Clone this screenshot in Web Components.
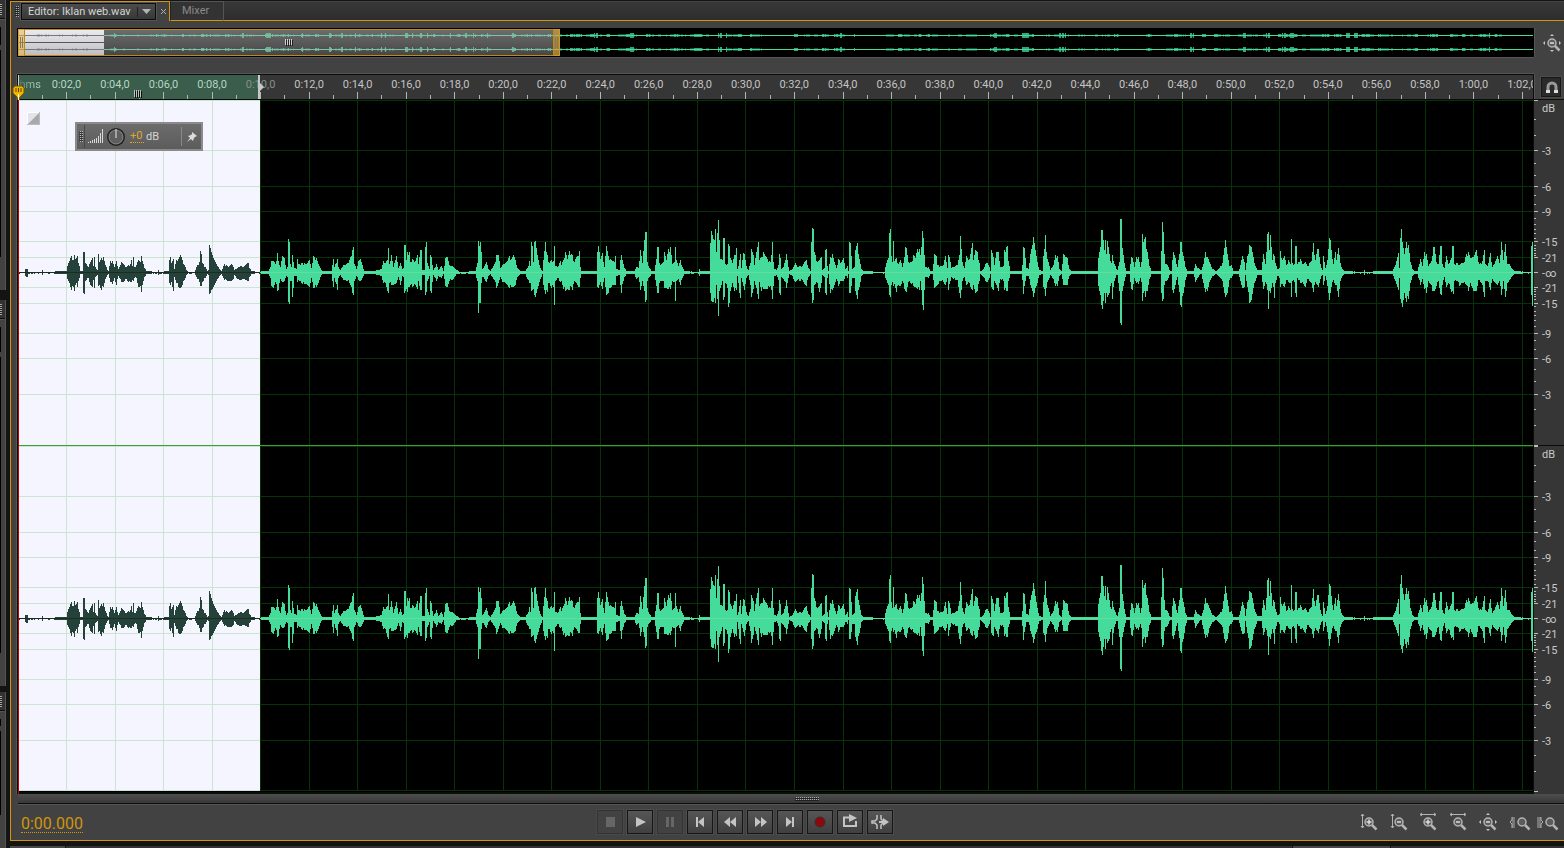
<!DOCTYPE html>
<html lang="en">
<head>
<meta charset="utf-8">
<meta name="viewport" content="width=device-width, initial-scale=1">
<title>Editor: Iklan web.wav</title>
<style>
  body {
    margin: 0;
    background: #141414;
    color: #c8c8c8;
    font: 11px/14px Roboto, "Noto Sans", sans-serif;
    --gold: #d0950c;
    --face: #424242;
    --dark: #141414;
    --ruler: #363636;
    --wave: #45dc9b;
    --sel: 16%;
    overflow: hidden;
  }
</style>
</head>
<body>
<app-shell>
  <side-panel slot="side" style="flex: 290 0 0"></side-panel>
  <side-panel slot="side" style="flex: 386 0 0; margin-top: 10px"></side-panel>
  <side-panel slot="side" style="flex: 156 0 0; margin-top: 6px"></side-panel>

  <tab-bar slot="tabs" file="Editor: Iklan web.wav">Mixer</tab-bar>
  <wave-overview slot="overview"></wave-overview>
  <tool-button slot="overview-tool" plain label="Zoom out full"><tool-icon name="zoom-full"></tool-icon></tool-button>
  <time-ruler slot="ruler"></time-ruler>
  <tool-button slot="ruler-tool" snap label="Snap"><tool-icon name="magnet"></tool-icon></tool-button>

  <wave-channel slot="plot"></wave-channel>
  <wave-channel slot="plot" last></wave-channel>
  <gain-hud slot="hud">dB</gain-hud>
  <db-scale slot="scale"></db-scale>
  <db-scale slot="scale" last></db-scale>

  <time-display slot="time">0:00.000</time-display>
  <button-row slot="transport" style="--gap: 4px">
    <tool-button off label="Stop"><tool-icon name="stop"></tool-icon></tool-button>
    <tool-button label="Play"><tool-icon name="play"></tool-icon></tool-button>
    <tool-button off label="Pause"><tool-icon name="pause"></tool-icon></tool-button>
    <tool-button label="Move to previous"><tool-icon name="prev"></tool-icon></tool-button>
    <tool-button label="Rewind"><tool-icon name="rewind"></tool-icon></tool-button>
    <tool-button label="Fast forward"><tool-icon name="forward"></tool-icon></tool-button>
    <tool-button label="Move to next"><tool-icon name="next"></tool-icon></tool-button>
    <tool-button label="Record"><tool-icon name="record"></tool-icon></tool-button>
    <tool-button label="Loop playback"><tool-icon name="loop"></tool-icon></tool-button>
    <tool-button label="Skip selection"><tool-icon name="skip"></tool-icon></tool-button>
  </button-row>
  <button-row slot="zoom" style="--gap: 10px">
    <tool-button plain label="Zoom in amplitude"><tool-icon name="amp-in"></tool-icon></tool-button>
    <tool-button plain label="Zoom out amplitude"><tool-icon name="amp-out"></tool-icon></tool-button>
    <tool-button plain label="Zoom in time"><tool-icon name="time-in"></tool-icon></tool-button>
    <tool-button plain label="Zoom out time"><tool-icon name="time-out"></tool-icon></tool-button>
    <tool-button plain label="Zoom out full"><tool-icon name="zoom-full"></tool-icon></tool-button>
    <tool-button plain label="Zoom in at in point"><tool-icon name="in-point"></tool-icon></tool-button>
    <tool-button plain label="Zoom in at out point"><tool-icon name="out-point"></tool-icon></tool-button>
  </button-row>
</app-shell>

<script>
// peaks of the clip: x,up,down (x in px of the editor, which starts at 18)
const PEAKS = `18,0,0 24,0,0 25,3,3 27,3,4 28,0,0 41,0,0 42,2,2 43,0,0 66,1,1 67,6,6 69,11,10 71,16,17 73,12,14 74,17,18 76,14,10 77,16,14
79,6,5 80,1,1 82,1,1 83,20,20 84,20,21 85,9,8 86,8,7 88,5,5 90,10,12 92,14,14 93,6,7 94,15,15 95,5,4 97,2,2 98,18,13 99,10,12 101,14,17 103,15,14
105,7,6 107,2,2 108,1,1 110,11,9 112,11,11 114,5,5 116,11,12 118,3,3 121,10,9 123,8,9 125,5,6 128,7,9 130,8,9 131,12,9 132,6,7 133,15,8 134,5,5
136,7,5 138,12,14 140,10,13 141,16,19 142,11,12 144,4,4 146,1,1 157,0,0 158,2,2 159,0,0 168,1,1 169,12,10 170,15,12 171,9,9 173,13,18 174,3,4
176,12,10 178,13,14 180,17,15 182,12,12 184,7,7 186,2,2 188,0,0 194,0,0 195,2,2 197,7,6 199,10,9 200,21,13 201,18,13 202,9,9 205,5,5 207,1,1 208,2,2
209,27,21 210,24,20 211,20,17 213,14,14 216,8,8 219,3,3 221,1,1 223,6,5 224,8,7 226,7,7 228,5,8 231,8,8 233,5,6 234,2,2 237,4,6 240,6,7 243,5,6
246,8,7 248,9,8 249,4,4 251,1,1 259,0,0 262,1,1 268,1,1 270,5,5 271,11,13 273,11,15 275,8,9 277,19,18 278,11,17 280,5,6 282,16,9 284,14,8 286,3,3
287,5,4 288,33,29 289,30,31 290,8,8 291,5,8 292,17,24 293,10,15 294,4,3 296,3,3 297,13,9 298,8,7 302,9,11 306,8,11 309,12,14 311,4,5 313,16,15
316,14,14 318,8,10 320,4,4 322,1,1 331,1,1 333,13,14 334,5,5 337,13,17 338,5,5 340,2,2 343,7,7 346,8,8 348,9,7 350,15,12 352,22,20 353,25,22
354,8,8 356,3,3 358,11,7 360,13,8 362,7,5 364,1,1 371,1,1 378,2,2 381,3,3 383,11,10 385,9,10 387,12,18 388,24,20 389,8,10 391,17,12 393,5,12
396,16,10 398,4,4 400,9,12 402,3,3 403,4,4 404,27,20 405,27,18 406,12,16 407,20,19 409,20,14 410,10,12 412,13,14 415,11,12 417,17,16 418,8,8
420,22,17 421,22,17 422,2,2 424,2,2 425,25,22 426,30,19 427,9,8 429,3,3 430,17,18 431,15,20 433,2,2 436,8,8 438,2,3 441,6,5 443,1,1 445,14,13
447,15,14 449,7,8 453,5,6 456,2,1 460,0,0 475,1,1 477,9,8 478,31,40 479,26,30 480,30,30 481,20,10 482,3,4 484,6,6 486,10,9 488,3,3 490,1,1 492,4,4
495,10,9 496,17,15 498,17,10 500,4,4 502,7,9 504,8,9 507,11,12 509,16,15 511,13,14 513,17,14 515,12,12 517,4,4 520,1,1 525,1,1 527,4,6 529,11,10
530,6,10 531,30,18 532,26,17 533,10,16 534,30,22 535,31,24 537,17,16 539,7,9 541,2,4 542,1,1 543,12,12 545,30,21 547,17,19 548,10,10 551,12,15
553,11,14 554,26,32 555,6,8 557,5,5 560,11,9 561,7,8 563,12,16 565,20,18 567,13,16 569,21,17 571,18,14 572,17,17 574,10,8 576,15,10 578,16,14
579,21,14 580,5,5 581,1,1 596,1,1 597,20,14 598,26,15 600,13,9 602,19,16 604,5,5 606,26,22 608,16,20 610,13,15 612,11,12 614,10,12 615,16,12
616,3,3 619,2,2 620,12,12 621,17,20 622,12,11 624,4,4 626,1,1 634,1,1 636,5,6 638,4,4 640,22,17 642,9,8 644,32,18 645,40,29 646,40,27 647,10,8
649,4,4 651,1,1 654,1,1 656,13,13 657,25,20 658,25,20 659,9,10 661,8,8 663,10,8 664,20,15 666,12,15 668,23,16 670,25,16 672,8,8 674,10,9 675,25,28
676,12,8 678,6,6 680,12,12 682,5,5 684,1,1 698,0,0 699,3,3 700,1,1 709,1,1 710,29,20 711,41,28 713,33,29 715,43,30 716,20,12 717,39,26 718,52,43
719,32,18 720,13,15 722,12,8 723,34,27 724,34,24 725,8,10 727,8,15 728,28,34 729,26,30 730,14,18 732,9,10 734,17,18 736,24,17 737,3,3 739,12,20
740,18,25 741,4,5 743,19,13 744,18,17 746,6,5 748,2,2 750,9,12 751,23,24 753,17,16 754,7,8 756,20,15 758,30,26 759,12,9 761,15,18 763,20,16 765,16,16
767,13,16 770,10,13 772,30,26 773,10,13 774,3,3 776,2,2 778,7,7 779,18,20 780,14,22 781,3,4 783,5,6 785,12,9 786,18,15 788,5,5 789,1,1 791,2,2
793,5,6 795,9,9 797,5,7 799,6,8 802,6,7 804,10,11 806,12,13 808,4,4 810,1,1 811,30,20 812,44,30 813,43,27 814,20,12 817,10,10 819,12,19 821,15,10
822,2,2 824,4,4 825,22,20 826,23,22 827,6,5 828,1,1 830,15,20 832,18,17 834,10,12 836,4,6 838,13,13 841,10,8 843,14,8 845,3,3 847,6,5 848,1,1
849,30,20 850,29,20 852,3,5 854,5,5 855,22,18 857,29,26 859,13,14 861,3,3 863,1,1 884,0,0 885,5,5 886,9,7 888,14,12 889,39,22 890,43,24 891,16,12
892,10,9 893,31,13 894,11,11 896,14,19 898,8,12 900,12,13 902,5,8 904,15,16 905,25,18 906,24,19 908,10,9 911,10,11 913,17,13 915,14,14 917,23,16
919,23,17 920,17,8 922,41,32 923,34,37 925,5,4 928,5,5 930,1,1 932,1,1 934,18,15 936,16,13 937,7,12 940,6,8 943,7,9 945,16,12 947,4,5 948,17,17
949,15,11 951,4,4 953,5,6 957,7,7 959,17,20 960,36,25 962,10,8 964,4,4 966,16,12 968,12,9 970,18,14 972,29,17 973,12,12 975,22,20 977,20,18 979,9,8
980,1,1 983,3,4 985,8,8 987,9,9 989,5,5 990,1,1 991,22,14 993,15,17 994,7,8 996,20,12 998,20,18 1000,5,6 1003,6,8 1004,22,17 1007,26,18 1008,11,8
1010,1,1 1021,1,1 1022,7,7 1023,25,21 1024,24,13 1026,4,3 1028,3,3 1030,18,12 1032,27,18 1033,35,24 1035,22,15 1037,10,10 1039,2,2 1042,1,1
1043,16,14 1045,37,23 1046,20,15 1048,10,7 1050,2,2 1053,7,6 1055,17,13 1057,16,13 1059,3,3 1061,1,1 1063,18,12 1065,15,12 1067,14,12 1069,3,3
1071,1,1 1097,1,1 1098,14,13 1100,25,22 1101,42,32 1102,42,36 1104,22,20 1105,32,30 1106,18,20 1107,31,24 1109,18,20 1111,9,10 1112,17,26 1114,8,8
1116,3,2 1117,2,2 1119,10,18 1120,53,50 1121,53,52 1122,24,18 1124,9,8 1126,1,1 1129,1,1 1131,15,16 1132,14,17 1134,5,5 1136,15,10 1138,15,11
1140,5,5 1141,10,9 1142,38,28 1144,33,18 1145,35,24 1147,20,18 1149,6,6 1151,1,1 1160,1,1 1161,21,20 1162,50,28 1163,40,26 1164,18,12 1165,8,8
1167,7,7 1169,2,2 1171,1,1 1172,12,17 1173,20,20 1175,14,12 1177,5,4 1178,12,12 1180,30,32 1181,30,34 1183,16,20 1185,5,7 1187,1,1 1193,1,1
1195,8,9 1197,4,5 1199,3,2 1201,2,1 1203,8,10 1205,20,19 1207,15,18 1209,10,9 1212,3,3 1216,1,1 1219,4,4 1222,9,8 1224,24,20 1225,32,24 1227,18,20
1229,6,7 1231,7,5 1233,1,1 1238,1,1 1240,7,8 1242,16,15 1244,10,14 1245,2,2 1247,16,14 1249,27,30 1251,25,27 1253,15,15 1255,6,8 1257,2,2 1261,2,2
1263,18,16 1265,8,9 1267,38,17 1268,40,36 1269,22,18 1270,37,20 1272,12,10 1273,18,14 1274,16,25 1275,9,10 1277,3,3 1279,4,5 1280,21,14 1282,12,11
1284,16,14 1286,7,7 1288,12,9 1290,8,10 1291,33,24 1292,9,8 1294,8,9 1295,26,20 1296,26,24 1297,8,5 1300,13,10 1303,8,11 1305,10,14 1307,6,6 1309,9,8
1311,11,10 1313,29,19 1315,12,9 1317,23,12 1318,23,14 1319,15,10 1321,4,3 1322,2,2 1323,16,12 1325,4,3 1327,12,13 1329,34,27 1330,32,20 1331,22,14
1333,8,7 1335,20,12 1336,12,12 1338,24,24 1340,9,8 1342,3,3 1345,1,1 1363,0,0 1364,2,2 1365,0,0 1380,1,1 1392,1,1 1395,7,8 1398,19,17 1399,4,5
1400,34,26 1401,43,30 1402,30,34 1404,18,20 1406,30,29 1408,27,26 1410,10,10 1412,3,3 1414,1,1 1417,1,1 1420,13,12 1422,6,6 1424,20,16 1426,18,20
1428,6,8 1430,9,11 1432,16,18 1433,25,18 1434,25,18 1436,10,13 1438,8,8 1440,26,21 1441,26,22 1442,8,12 1444,4,4 1446,16,14 1448,8,10 1451,14,19
1452,26,18 1453,26,21 1454,8,8 1457,9,8 1459,7,13 1461,9,10 1463,9,10 1466,18,12 1468,20,18 1470,14,10 1473,15,18 1476,22,18 1478,10,7 1481,8,10
1484,22,24 1485,8,8 1487,6,8 1490,19,17 1492,5,6 1494,8,9 1497,16,12 1499,9,8 1501,30,22 1502,22,16 1503,12,8 1505,28,24 1506,16,18 1507,8,10
1509,8,7 1511,4,4 1514,1,1 1530,0,0 1531,26,22 1532,30,33 1533,30,33`.split(/\s+/).map(p => p.split(',').map(Number));

const WIDTH = 1515;
const SELECTED = 242;
const STEP = 48.53; // two seconds

// one [up, down] pair for every column
const columns = [];
let k = 0;
for (let x = 18; x < 18 + WIDTH; x++) {
  while (PEAKS[k + 1][0] < x) k++;
  const a = PEAKS[k], b = PEAKS[k + 1];
  const t = (x - a[0]) / (b[0] - a[0]);
  const rough = t > 0 && t < 1 && x % 3 === 0 ? 0.85 : 1;
  columns.push([1, 2].map(i => Math.round((a[i] + (b[i] - a[i]) * t) * rough)));
}

function noise(n) {
  const v = Math.sin(n * 12.9898) * 43758.5453;
  return v - Math.floor(v);
}

function wavePath(from, to, mid) {
  let d = '';
  for (let x = from; x < to; x++) {
    let [u, l] = columns[x];
    if (u + l === 0 && noise(x) > 0.7) l = 1;
    d += `M${x} ${mid - u}h1v${u + l + 1}h-1z`;
  }
  return d;
}

class BaseElement extends HTMLElement {
  connectedCallback() {
    if (this.shadowRoot) return;
    this.attachShadow({ mode: 'open' });
    this.shadowRoot.innerHTML = this.render();
  }
}

class AppShell extends BaseElement {
  render() {
    return `
      <style>
        :host {
          display: grid;
          grid-template: 1fr 7px / 10px 1fr;
          height: 100vh;
        }
        .side {
          grid-row: 1 / 3;
          display: flex;
          flex-direction: column;
          width: 6px;
        }
        main {
          display: flex;
          flex-direction: column;
          min-width: 0;
          min-height: 0;
        }
        .body {
          flex: 1;
          min-height: 0;
          display: flex;
          flex-direction: column;
          background: var(--face);
          border: solid var(--gold);
          border-width: 0 0 1px 1px;
        }
        .work {
          flex: 1;
          min-height: 0;
          display: grid;
          grid-template: "overview full" 30px ". ." 16px "ruler snap" 26px "plot scale" 1fr / 1fr 30px;
          padding: 7px 0 0 6px;
        }
        .overview { grid-area: overview; }
        .overview-tool { grid-area: full; display: grid; place-items: center end; }
        .ruler { grid-area: ruler; min-width: 0; }
        .ruler-tool {
          grid-area: snap;
          display: grid;
          place-items: center;
          padding-left: 4px;
          border-bottom: 1px solid #0c0c0c;
        }
        .plot {
          grid-area: plot;
          position: relative;
          display: flex;
          flex-direction: column;
          background: #000;
          border: solid #0c0c0c;
          border-width: 0 1px 2px;
          box-shadow: -1px 0 #555;
        }
        .playhead {
          position: absolute;
          inset: 0 auto -2px 0;
          width: 1px;
          background: #c80000;
        }
        .pin { position: absolute; left: -6px; top: -15px; }
        .fade { position: absolute; left: 9px; top: 12px; }
        .hud { position: absolute; left: 57px; top: 22px; }
        .scale {
          grid-area: scale;
          display: flex;
          flex-direction: column;
          background: var(--ruler);
          padding-bottom: 2px;
        }
        .scroll {
          margin-left: 7px;
          height: 9px;
          background: linear-gradient(#4e4e4e, #383838);
          border-bottom: 1px solid #0c0c0c;
          box-shadow: 0 1px #555;
          display: grid;
          place-items: center;
          padding-left: 31px;
        }
        .scroll i {
          width: 24px;
          height: 4px;
          background: conic-gradient(#aaa 25%, #222 0 50%, #222 0 75%, #444 0) 0 0 / 2px 2px;
        }
        .transport {
          display: flex;
          align-items: center;
          height: 36px;
          padding: 0 4px 0 10px;
        }
        .lead { flex: 11; }
        .trail { flex: 10; }
        footer {
          display: flex;
          gap: 1px;
          padding-top: 5px;
        }
        footer i { background: #333; }
      </style>
      <div class="side"><slot name="side"></slot></div>
      <main>
        <slot name="tabs"></slot>
        <div class="body">
          <div class="work">
            <div class="overview"><slot name="overview"></slot></div>
            <div class="overview-tool"><slot name="overview-tool"></slot></div>
            <div class="ruler"><slot name="ruler"></slot></div>
            <div class="ruler-tool"><slot name="ruler-tool"></slot></div>
            <div class="plot">
              <slot name="plot"></slot>
              <div class="playhead"></div>
              <svg class="pin" width="13" height="15">
                <path d="M1 3l2-2h7l2 2v5l-4 4-1 3h-1l-1-3-4-4z" fill="#f0b400" stroke="#7a5600"/>
                <path d="M4 3v4M6.500 3v4M9 3v4" stroke="#5a4000"/>
                <path d="M6 9h1v6h-1z" fill="#fff"/>
              </svg>
              <svg class="fade" width="13" height="13">
                <path d="M0 0h13v13H0z" fill="#fff"/>
                <path d="M1 1h11v11H1z" fill="#e4e4e8"/>
                <path d="M12 1v11H1z" fill="#a9a9ad"/>
                <path d="M0 12.500h13M12.500 0v13" stroke="#bbb"/>
              </svg>
              <div class="hud"><slot name="hud"></slot></div>
            </div>
            <div class="scale"><slot name="scale"></slot></div>
          </div>
          <div class="scroll"><i></i></div>
          <div class="transport">
            <slot name="time"></slot>
            <span class="lead"></span>
            <slot name="transport"></slot>
            <span class="trail"></span>
            <slot name="zoom"></slot>
          </div>
        </div>
      </main>
      <footer>
        <i style="flex: 55; background: #484848"></i>
        <i style="flex: 1226"></i>
        <i style="flex: 97; background: #484848"></i>
        <i style="flex: 173"></i>
      </footer>
    `;
  }
}

class SidePanel extends BaseElement {
  render() {
    return `
      <style>
        :host {
          display: flex;
          flex-direction: column;
          background: #424242;
          border-right: 1px solid #555;
          box-shadow: 0 1px #555 inset;
        }
        header {
          height: 18px;
          border-bottom: 1px solid #0c0c0c;
          background: #333;
          display: flex;
          align-items: center;
          box-shadow: 0 1px #555;
        }
        header i {
          width: 2px;
          height: 11px;
          background: repeating-linear-gradient(#aaa 0 1px, #222 1px 2px);
        }
        .field { width: 1px; background: #000; }
      </style>
      <header><i></i></header>
      <div class="field" style="flex: 17; margin-top: 8px"></div>
      <div class="field" style="flex: 200; margin: 5px 0 33px"></div>
    `;
  }
}

class TabBar extends BaseElement {
  render() {
    return `
      <style>
        :host { display: flex; height: 21px; box-sizing: border-box; padding-top: 1px; }
        .active {
          display: flex;
          align-items: center;
          box-sizing: border-box;
          width: 160px;
          padding-left: 4px;
          background: var(--face);
          border: solid var(--gold);
          border-width: 1px 1px 0;
        }
        .grip {
          width: 4px;
          height: 11px;
          margin-right: 2px;
          background: conic-gradient(#aaa 25%, #222 0 50%, #222 0 75%, #444 0) 0 0 / 2px 2px;
        }
        label {
          display: grid;
          align-items: center;
          box-sizing: border-box;
          width: 135px;
          height: 17px;
          border: 1px solid #0c0c0c;
          box-shadow: 0 0 0 1px #555;
          background: linear-gradient(#4c4c4c, #383838);
        }
        label > * { grid-area: 1 / 1; }
        select {
          appearance: none;
          height: 15px;
          padding: 0 18px 0 6px;
          border: 0;
          background: none;
          color: #d4d4d4;
          font: inherit;
          line-height: 15px;
        }
        label svg { justify-self: end; pointer-events: none; }
        .close {
          display: grid;
          place-items: center;
          margin-left: 2px;
          padding: 0;
          width: 11px;
          height: 16px;
          border: 0;
          background: none;
        }
        .tab {
          border: solid #555;
          border-width: 1px 1px 0;
          border-left-color: #222;
          border-bottom: 1px solid var(--gold);
          padding: 0 14px 0 11px;
          background: #333;
          color: #8a8a8a;
          font: inherit;
          line-height: 18px;
        }
        .rest {
          flex: 1;
          border-top: 1px solid #444;
          border-bottom: 1px solid var(--gold);
          background: linear-gradient(#383838, #2d2d2d);
        }
      </style>
      <div class="active">
        <span class="grip"></span>
        <label>
          <select aria-label="Open file"><option>${this.getAttribute('file')}</option></select>
          <svg width="22" height="15">
            <path d="M4.500 3v10" stroke="#222"/>
            <path d="M9 5h9l-4.500 5z" fill="#b4b4b4"/>
          </svg>
        </label>
        <button class="close" aria-label="Close">
          <svg width="7" height="7"><path d="M1 1l5 5M6 1L1 6" stroke="#b0b0b0"/></svg>
        </button>
      </div>
      <button class="tab"><slot></slot></button>
      <div class="rest"></div>
    `;
  }
}

class WaveOverview extends BaseElement {
  render() {
    // the visible part is the clip itself, the remainder is quieter material
    const win = 542, sel = 86;
    const parts = ['', '', '', '', '', ''];
    for (let x = 0; x < WIDTH; x++) {
      let peak;
      if (x < win) {
        const i = Math.floor(x * WIDTH / win);
        peak = Math.max(...columns.slice(i, i + 3).map(c => c[0]));
      } else {
        const group = noise(Math.floor(x / 4) + 3);
        peak = noise(Math.floor(x / 31)) > 0.15 ? group * 34 : 0;
        if (noise(x + 9) > 0.7) peak *= 0.6;
      }
      const h = peak > 31 ? 2 : peak > 14 ? 1 : 0;
      if (!h) continue;
      const part = (x < sel ? 0 : x < win ? 1 : 2) + (peak > 25 ? 3 : 0);
      for (const y of [6, 20]) parts[part] += `M${x} ${y - h}h1v${h * 2 + 1}h-1z`;
    }
    return `
      <style>
        :host {
          display: block;
          border: 1px solid #000;
          height: 27px;
          box-shadow: 0 1px #555, 1px 0 #555;
          background: #000;
        }
        svg { display: block; width: 100%; height: 27px; }
      </style>
      <svg viewBox="0 0 1515 27" preserveAspectRatio="none" shape-rendering="crispEdges">
        <linearGradient id="view" x2="0" y2="1"><stop stop-color="#6e6e6e"/><stop offset="1" stop-color="#454545"/></linearGradient>
        <linearGradient id="sel" x2="0" y2="1"><stop stop-color="#ececf0"/><stop offset="1" stop-color="#bcbcc2"/></linearGradient>
        <path d="M0 0h542v27H0z" fill="url(#view)"/>
        <path d="M0 0h86v27H0z" fill="url(#sel)"/>
        <path d="${parts[0]}${parts[3]}" fill="#777" opacity=".35"/>
        <path d="${parts[1]}" fill="#74c8a3" opacity=".3"/>
        <path d="${parts[4]}" fill="#74c8a3" opacity=".8"/>
        <path d="${parts[2]}" fill="#3ac58a" opacity=".4"/>
        <path d="${parts[5]}" fill="#3ac58a" opacity=".85"/>
        <path d="M0 13h86v1H0z" fill="#55555a"/>
        <path d="M0 6h86v1H0zM0 20h86v1H0z" fill="#77777a"/>
        <path d="M86 6h456v1H86zM86 20h456v1H86z" fill="#7cc4a6"/>
        <path d="M542 6h973v1H542zM542 20h973v1H542z" fill="#45dc9b"/>
        <path d="M0 0h542v27H0zM1 1v25h540V1z" fill="#c08a10" fill-rule="evenodd"/>
        <path d="M0 0h7v27H0z" fill="#f0b440" opacity=".5"/>
        <path d="M535 0h7v27h-7z" fill="#d9a430" opacity=".6"/>
        <path d="M6 0h1v27H6zM535 0h1v27h-1z" fill="#c08a10"/>
        <path d="M2 8h1v11H2zM4 8h1v11H4zM537 8h1v11h-1zM539 8h1v11h-1z" fill="#8a7a50"/>
        <path d="M267 10h1v6h-1zM269 10h1v6h-1zM271 10h1v6h-1zM273 10h1v6h-1z" fill="#d0d0d0"/>
        <path d="M268 11h1v6h-1zM270 11h1v6h-1zM272 11h1v6h-1zM274 11h1v6h-1z" fill="#222"/>
      </svg>
    `;
  }
}

class TimeRuler extends BaseElement {
  render() {
    let cells = '';
    for (let s = 2; s <= 62; s += 2) {
      const text = `${Math.floor(s / 60)}:${String(s % 60).padStart(2, '0')},0`;
      const tone = s < 10 ? 'in' : s === 10 ? 'edge' : '';
      cells += `<span class="${tone}">${text}</span>`;
    }
    let ticks = '';
    for (let i = 1; i * STEP / 2 < WIDTH; i++) {
      const x = Math.floor(i * STEP / 2);
      ticks += i % 2 ? `M${x} 20h1v4h-1z` : `M${x} 17h1v7h-1z`;
    }
    return `
      <style>
        :host {
          display: grid;
          grid-template-columns: minmax(0, 1fr);
          height: 24px;
          border: 1px solid #0c0c0c;
          background: var(--ruler);
          box-shadow: 0 -1px #555, -1px 0 #555, 1px 0 #555;
        }
        :host > * { grid-area: 1 / 1; }
        .layer { grid-area: 1 / 1; }
        .sel {
          width: var(--sel);
          background: #3b5d4c;
          box-shadow: 1px 0 #cfcfcf inset;
        }
        .marks { position: relative; width: var(--sel); }
        .bars { position: absolute; left: 116px; top: 15px; }
        .bracket { position: absolute; right: -4px; top: 0; }
        svg.ticks { display: block; width: 100%; height: 24px; }
        .labels {
          display: flex;
          overflow: hidden;
          line-height: 20px;
          white-space: nowrap;
        }
        .labels span {
          flex: 0 0 3.2033%;
          display: flex;
          justify-content: center;
          color: #c4c4c4;
        }
        .labels .unit {
          flex-basis: 1.6%;
          background: linear-gradient(90deg, #4a6b59, #a9cfba 60%);
          background-clip: text;
          color: transparent;
        }
        .labels .in { color: #b4d8c4; }
        .labels .edge { color: #84908a; }
      </style>
      <div class="layer sel"></div>
      <svg class="layer ticks" viewBox="0 0 1515 24" preserveAspectRatio="none" shape-rendering="crispEdges">
        <path d="${ticks}" fill="#b4b4b4"/>
      </svg>
      <div class="layer labels"><span class="unit">hms</span>${cells}</div>
      <div class="layer marks">
        <svg class="bars" width="9" height="8" shape-rendering="crispEdges">
          <path d="M0 0h1v7H0zM2 0h1v7H2zM4 0h1v7H4zM6 0h1v7H6z" fill="#b8c8be"/>
          <path d="M1 1h1v7H1zM3 1h1v7H3zM5 1h1v7H5zM7 1h1v7H7z" fill="#111"/>
        </svg>
        <svg class="bracket" width="6" height="24">
          <path d="M0 0h2v8l4 4-4 4v8H0z" fill="#c8c8c8"/>
        </svg>
      </div>
    `;
  }
}

class WaveChannel extends BaseElement {
  render() {
    const rows = [0, 50, 86, 111, 141, 157, 187, 203, 233, 258, 294];
    if (this.hasAttribute('last')) rows.push(344);
    let sel = '', rest = '';
    for (const y of rows) {
      sel += `M0 ${y}h${SELECTED}v1H0z`;
      rest += `M${SELECTED} ${y}h${WIDTH - SELECTED}v1H${SELECTED}z`;
    }
    for (let i = 1; i * STEP < WIDTH; i++) {
      const x = Math.floor(i * STEP);
      const line = `M${x} 0h1v345h-1z`;
      if (x < SELECTED) sel += line; else rest += line;
    }
    const divider = this.hasAttribute('last') ? '' : `
      <path d="M0 345h1515v1H0z" fill="#3fa034"/>`;
    return `
      <style>
        :host { display: block; flex: 1; min-height: 0; }
        svg { display: block; width: 100%; height: 100%; }
      </style>
      <svg viewBox="0 0 1515 346" preserveAspectRatio="none" shape-rendering="crispEdges">
        <path d="M0 0h${SELECTED}v345H0z" fill="#f4f5ff"/>
        <path d="${sel}" fill="#cde4d0"/>
        <path d="${rest}" fill="#053305"/>
        <path d="${wavePath(0, SELECTED, 172)}" fill="#25423a"/>
        <path d="${wavePath(SELECTED, WIDTH, 172)}" fill="#45dc9b"/>
        <path d="M0 172h${SELECTED}v1H0z" fill="#1c2a20"/>
        <path d="M${SELECTED} 172h1273v1H${SELECTED}z" fill="#62dda0"/>
        ${divider}
      </svg>
    `;
  }
}

class DbScale extends BaseElement {
  render() {
    const pct = y => (y / 346 * 100).toFixed(3) + '%';
    const major = [3, 6, 9, 15, 21];
    let ticks = '', labels = '';
    const tick = (y, w) => { ticks += `<rect y="${pct(y)}" width="${w}" height="1"/>`; };
    const label = (y, text) => { labels += `<text x="8" y="${pct(y + 4)}">${text}</text>`; };
    tick(0, 4);
    tick(345, 4);
    tick(172, 4);
    for (let db = 1; db <= 21; db++) {
      const off = Math.round(172 * Math.pow(10, -db / 20));
      const w = major.includes(db) ? 4 : 2;
      tick(172 - off, w);
      tick(172 + off, w);
    }
    label(8, 'dB');
    label(173, '-∞');
    for (const db of major) {
      const off = Math.round(172 * Math.pow(10, -db / 20));
      label(173 - off, '-' + db);
      label(173 + off, '-' + db);
    }
    return `
      <style>
        :host { display: block; flex: 1; min-height: 0; }
        :host(:not([last])) { box-shadow: 0 -1px #0c0c0c inset; }
        svg { display: block; width: 100%; height: 100%; }
        rect { fill: #bcbcbc; shape-rendering: crispEdges; }
        text { fill: #c8c8c8; }
      </style>
      <svg>${ticks}${labels}</svg>
    `;
  }
}

class GainHud extends BaseElement {
  render() {
    return `
      <style>
        :host {
          display: flex;
          align-items: center;
          box-sizing: border-box;
          width: 128px;
          height: 29px;
          padding-left: 2px;
          border: 2px solid #8a8a8a;
          background: linear-gradient(#6c6c6c, #5c5c5c);
          color: #d4d4d4;
        }
        .grip {
          width: 4px;
          height: 11px;
          background: conic-gradient(#bbb 25%, #333 0 50%, #333 0 75%, #555 0) 0 0 / 2px 2px;
        }
        .bar { width: 1px; height: 23px; background: #484848; margin: 0 2px 0 1px; }
        .knob { margin: 0 4px 0 2px; }
        .value {
          padding: 0;
          border: 0;
          border-bottom: 1px dotted #e0a820;
          background: none;
          color: #e0a820;
          width: 14px;
          font: inherit;
          line-height: 12px;
          margin-right: 2px;
        }
        .end { height: 19px; background: #888; margin: 0 5px 0 auto; }
        .pin { margin-right: 4px; }
      </style>
      <span class="grip"></span>
      <span class="bar"></span>
      <svg width="17" height="15" shape-rendering="crispEdges">
        <path d="M1 13h1v1H1zM3 12h1v2H3zM5 11h1v3H5zM7 10h1v4H7zM9 9h1v5H9zM11 7h1v7h-1zM13 4h1v10h-1zM15 0h1v14h-1z" fill="#d8d8d8"/>
      </svg>
      <svg class="knob" width="20" height="20">
        <circle cx="10" cy="10" r="9" fill="#222"/>
        <circle cx="10" cy="10" r="7" fill="#5e5e5e" stroke="#8a8a8a"/>
        <path d="M10 2v9" stroke="#e8e8e8"/>
      </svg>
      <input class="value" aria-label="Gain" value="+0">
      <slot></slot>
      <span class="bar end"></span>
      <svg class="pin" width="10" height="10">
        <path d="M5 0l5 4-2 1-1 1-1 3-2-2-4 3 3-4-2-2 3-1 1-1z" fill="#dcdcdc"/>
      </svg>
    `;
  }
}

class TimeDisplay extends BaseElement {
  render() {
    return `
      <style>
        :host {
          display: block;
          margin-top: 4px;
          color: var(--gold);
          font-size: 16px;
          line-height: 16px;
          border-bottom: 1px dotted var(--gold);
        }
      </style>
      <slot></slot>
    `;
  }
}

class ButtonRow extends BaseElement {
  render() {
    return `
      <style>
        :host { display: flex; align-items: center; gap: var(--gap); }
      </style>
      <slot></slot>
    `;
  }
}

class ToolButton extends BaseElement {
  render() {
    const off = this.hasAttribute('off') ? 'disabled' : '';
    return `
      <style>
        :host { display: block; }
        button {
          display: grid;
          place-items: center;
          box-sizing: border-box;
          width: 26px;
          height: 24px;
          padding: 0;
          border: 1px solid #161616;
          background: linear-gradient(#565656, #404040);
          box-shadow: 0 0 0 1px #4c4c4c;
        }
        button:disabled {
          border-color: #2e2e2e;
          background: #434343;
          opacity: .7;
        }
        button:disabled ::slotted(*) { opacity: .4; }
        :host([plain]) button {
          width: 20px;
          height: 20px;
          border: 0;
          background: none;
          box-shadow: none;
        }
        :host([snap]) button {
          width: 20px;
          height: 20px;
          background: #2a2a2a;
        }
      </style>
      <button aria-label="${this.getAttribute('label')}" ${off}><slot></slot></button>
    `;
  }
}

const lens = `<circle cx="9" cy="9" r="4" fill="#5c5c5c" stroke="#b4b4b4" stroke-width="1.500"/>
  <path d="M12 12l4.500 4.500" stroke="#b4b4b4" stroke-width="2.500"/>`;
const minus = '<path d="M7 9h4" stroke="#ddd" stroke-width="1.500"/>';
const plus = '<path d="M6.500 9h5M9 6.500v5" stroke="#ddd" stroke-width="1.500"/>';
const vertical = '<path d="M2.500 2v14M1 4l1.500-2L4 4M1 14l1.500 2L4 14" stroke="#b4b4b4" fill="none"/>';
const horizontal = '<path d="M0 2.500h16M2 1L0 2.500 2 4M14 1l2 1.500L14 4" stroke="#b4b4b4" fill="none"/>';
const shift = (x, inner) => `<g transform="translate(${x} 1)">${inner}</g>`;

const ICONS = {
  stop: '<path d="M6 5h9v10H6z"/>',
  play: '<path d="M6 5l10 5-10 5z"/>',
  pause: '<path d="M6 5h3v10H6zM11 5h3v10h-3z"/>',
  prev: '<path d="M6 5h2v10H6zM14 5v10l-6-5z"/>',
  rewind: '<path d="M10 5v10l-6-5zM16 5v10l-6-5z"/>',
  forward: '<path d="M5 5v10l6-5zM11 5v10l6-5z"/>',
  next: '<path d="M6 5v10l6-5zM12 5h2v10h-2z"/>',
  record: '<circle cx="10" cy="10" r="5" fill="#8a0a10" stroke="#45282a"/>',
  loop: '<path d="M10 5.500H4V14h12V9" fill="none" stroke="#c4c4c4" stroke-width="2"/><path d="M9 2l8 4-8 4z"/>',
  skip: '<path d="M7 3v4l-2 2H2v2h3l2 2v4M11 3v4l2 2M11 17v-4l2-2" fill="none" stroke="#c4c4c4" stroke-width="1.500"/><path d="M9 9h5v2H9zM13 6l6 4-6 4z"/>',
  'zoom-full': shift(-1, `${lens}${minus}<path d="M9 0l2 2H7zM9 18l2-2H7zM2 7v4L0 9zM16 7v4l2-2z"/>`),
  'amp-in': vertical + shift(0, lens + plus),
  'amp-out': vertical + shift(0, lens + minus),
  'time-in': horizontal + shift(-1, lens + plus),
  'time-out': horizontal + shift(-1, lens + minus),
  'in-point': `<path d="M2 5h3v11H2z" fill="#777"/><path d="M2 5v3L0 10l2 2v4" stroke="#b4b4b4" fill="none"/>${shift(3, lens)}`,
  'out-point': `<path d="M-3 5h4v11h-4z" fill="#777"/><path d="M1 5v3l2 2-2 2v4" stroke="#b4b4b4" fill="none"/>${shift(1, lens)}`,
  magnet: '<path d="M6 15V9a4 4 0 0 1 8 0v6" fill="none" stroke="#999" stroke-width="3"/><path d="M4 12h4v3H4zM12 12h4v3h-4z" fill="#ddd"/>'
};

class ToolIcon extends BaseElement {
  render() {
    return `
      <style>
        :host { display: block; width: 20px; height: 20px; }
        svg { display: block; fill: #c4c4c4; overflow: visible; }
      </style>
      <svg width="20" height="20">${ICONS[this.getAttribute('name')]}</svg>
    `;
  }
}

customElements.define('app-shell', AppShell);
customElements.define('side-panel', SidePanel);
customElements.define('tab-bar', TabBar);
customElements.define('wave-overview', WaveOverview);
customElements.define('time-ruler', TimeRuler);
customElements.define('wave-channel', WaveChannel);
customElements.define('db-scale', DbScale);
customElements.define('gain-hud', GainHud);
customElements.define('time-display', TimeDisplay);
customElements.define('button-row', ButtonRow);
customElements.define('tool-button', ToolButton);
customElements.define('tool-icon', ToolIcon);
</script>
</body>
</html>
